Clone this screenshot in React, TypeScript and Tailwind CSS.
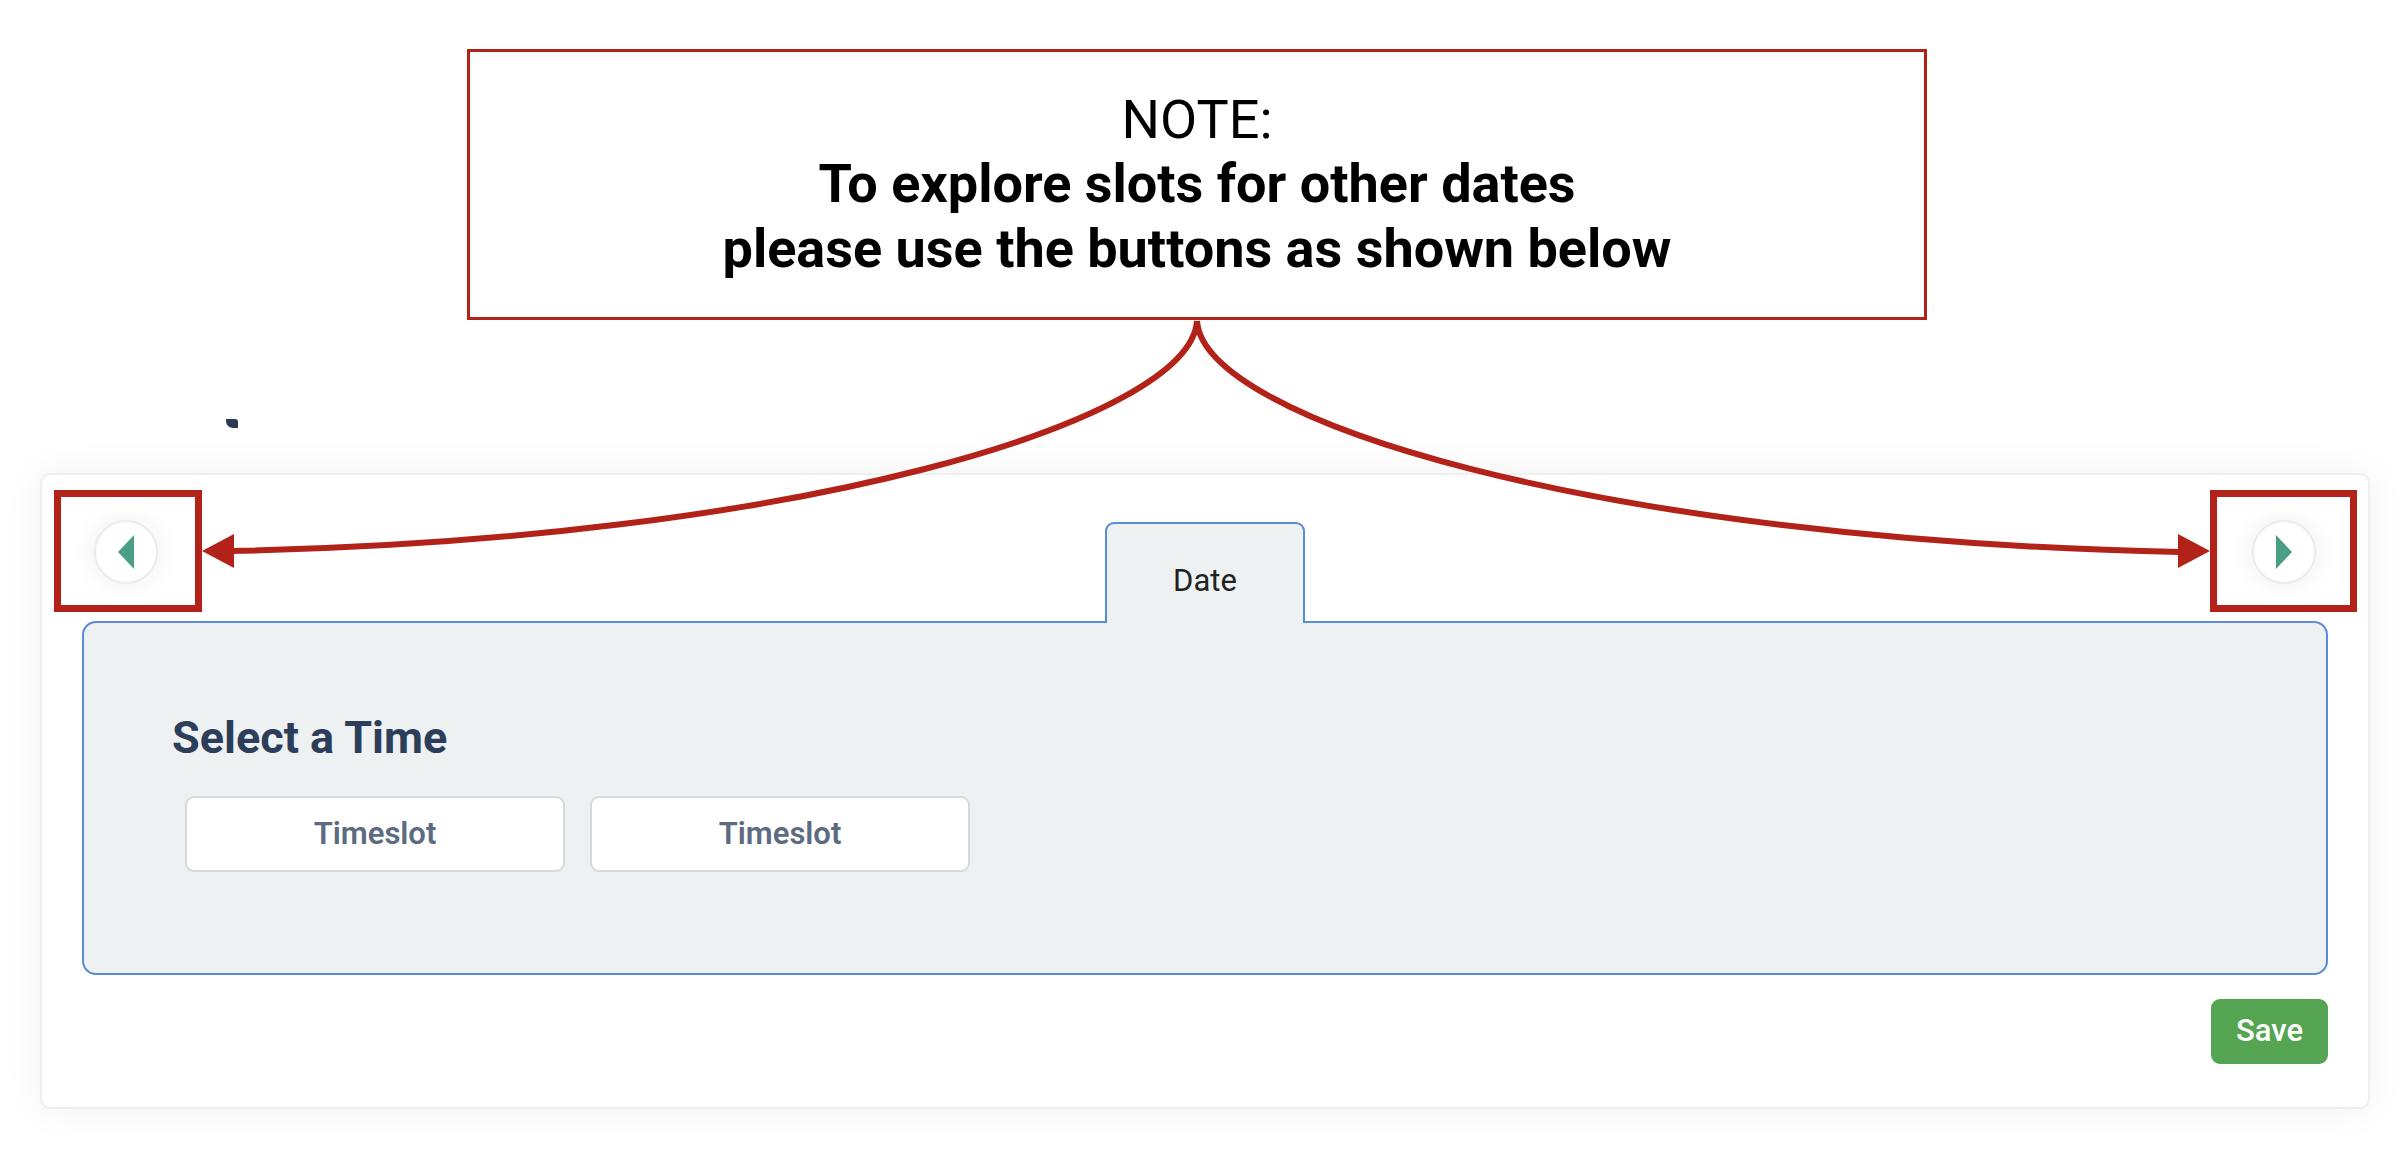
import React from "react";

const font = { fontFamily: "Roboto, 'Liberation Sans', sans-serif" };

function NavButton({ dir }: { dir: "left" | "right" }) {
    return (
        <button className="mt-[-2px] flex h-[64px] w-[64px] items-center justify-center rounded-full border-2 border-[#ececec] bg-white shadow-[0_0_28px_rgba(0,0,0,0.07)]">
            <svg width="18" height="34" viewBox="0 0 18 34">
                {dir === "left" ? (
                    <polygon points="1,17 17,0 17,34" fill="#4a9e86" />
                ) : (
                    <polygon points="17,17 1,0 1,34" fill="#4a9e86" />
                )}
            </svg>
        </button>
    );
}

export default function App() {
    const slots = ["Timeslot", "Timeslot"];

    return (
        <div className="relative h-[1152px] w-full overflow-hidden bg-white" style={font}>
            <div className="relative h-[473px]">
                <div className="absolute left-[226px] top-[419px] h-[9px] w-[12px] rounded-bl-[7px] rounded-tr-[3px] bg-[#2c3a55]" />
            </div>

            {/* Booking card */}
            <div className="ml-[40px] mr-[34px] rounded-[10px] border-2 border-[#efefef] bg-white px-[40px] pb-[43px] shadow-[0_0_40px_rgba(0,0,0,0.06)]">
                <div className="flex items-start justify-between px-[12px] pt-[47px]">
                    <NavButton dir="left" />
                    <div className="relative z-10 -mb-[2px] flex h-[101px] w-[200px] justify-center rounded-t-[9px] border-2 border-b-0 border-[#5a8bd8] bg-[#edf1f2] pt-[41px]">
                        <span className="text-[31px] leading-none text-[#222]">Date</span>
                    </div>
                    <NavButton dir="right" />
                </div>

                <div className="h-[354px] rounded-[14px] border-2 border-[#5a8bd8] bg-[#edf1f2] pl-[88px] pt-[92px]">
                    <h2 className="text-[45px] font-bold leading-none text-[#2d3e5a]">Select a Time</h2>
                    <div className="ml-[13px] mt-[36px] flex gap-[25px]">
                        {slots.map((s, i) => (
                            <button
                                key={i}
                                className="flex h-[76px] w-[380px] items-center justify-center rounded-[9px] border-2 border-[#d6dadf] bg-white text-[31px] font-semibold text-[#5c6b81]"
                            >
                                {s}
                            </button>
                        ))}
                    </div>
                </div>

                <div className="mt-[24px] flex justify-end">
                    <button className="flex h-[65px] w-[117px] items-center justify-center rounded-[9px] bg-[#55a452] text-[31px] font-medium text-white">
                        Save
                    </button>
                </div>
            </div>

            {/* Annotation overlay */}
            <div className="absolute left-[467px] top-[49px] flex h-[271px] w-[1460px] flex-col items-center justify-center border-[3px] border-[#b22219] bg-white text-[54px] leading-[64.5px] text-black">
                <div>NOTE:</div>
                <div className="font-bold">To explore slots for other dates</div>
                <div className="font-bold">please use the buttons as shown below</div>
            </div>

            <div className="absolute left-[54px] top-[490px] h-[122px] w-[148px] border-[7px] border-[#b22219]" />
            <div className="absolute left-[2210px] top-[490px] h-[122px] w-[147px] border-[7px] border-[#b22219]" />

            <svg className="pointer-events-none absolute inset-0" width="2404" height="1152" viewBox="0 0 2404 1152">
                <path d="M1197 321 C1190 420 800 540 230 551" fill="none" stroke="#b22219" strokeWidth="6" />
                <path d="M1197 321 C1204 420 1594 540 2180 552" fill="none" stroke="#b22219" strokeWidth="6" />
                <polygon points="202,551 234,534 234,568" fill="#b22219" />
                <polygon points="2210,551 2178,534 2178,568" fill="#b22219" />
            </svg>
        </div>
    );
}
